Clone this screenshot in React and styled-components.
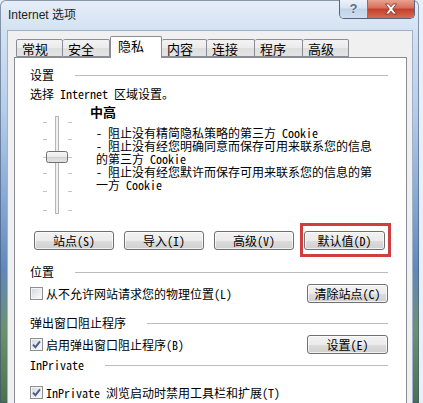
import React from 'react';
import styled, { createGlobalStyle } from 'styled-components';

const UI_FONT = `"Noto Sans Mono CJK SC", "Noto Sans CJK SC", "Liberation Mono", monospace`;
const TITLE_FONT = `"Liberation Sans", "Noto Sans CJK SC", sans-serif`;

const GlobalStyle = createGlobalStyle`
  html, body {
    margin: 0;
    padding: 0;
    width: 423px;
    height: 403px;
    overflow: hidden;
    background: #e9eff7;
  }
`;

const Window = styled.div`
  width: 419px;
  height: 403px;
  display: flex;
  flex-direction: column;
  border-radius: 6px 6px 0 0;
  overflow: hidden;
  background: linear-gradient(
    to bottom,
    #e6eef8 0,
    #d4e2f2 30px,
    #b6cde8 110px,
    #86a8d3 200px,
    #6287b8 270px,
    #6c9170 330px,
    #4b7150 403px
  );
  box-shadow: inset 0 0 0 1px rgba(60, 80, 110, 0.55);
`;

const TitleBar = styled.div`
  height: 30px;
  flex: none;
  display: flex;
  align-items: flex-start;
  justify-content: space-between;
  padding: 0 4px 0 8px;
`;

const TitleText = styled.div`
  font-family: ${TITLE_FONT};
  font-size: 12px;
  line-height: 30px;
  color: #1e1e1e;
`;

const Controls = styled.div`
  display: flex;
  border: 1px solid #54647c;
  border-top: none;
  border-radius: 0 0 5px 5px;
  overflow: hidden;
  margin-top: -1px;
`;

const HelpButton = styled.div`
  width: 27px;
  height: 19px;
  display: flex;
  align-items: center;
  justify-content: center;
  background: linear-gradient(to bottom, #eef3fa 0, #d9e4f1 45%, #c2d3e8 55%, #cfdeef 100%);
  border-right: 1px solid #6a7a92;
  font-family: ${TITLE_FONT};
  font-weight: bold;
  font-size: 13px;
  color: #5d6b80;
  text-shadow: 0 0 2px #fff;
`;

const CloseButton = styled.div`
  width: 46px;
  height: 19px;
  display: flex;
  align-items: center;
  justify-content: center;
  background: linear-gradient(to bottom, #e9a897 0, #d9705d 45%, #c2412d 55%, #d86b4f 100%);
`;

const Client = styled.div`
  flex: 1;
  display: flex;
  flex-direction: column;
  margin: 0 6px 0 7px;
  background: #f0f0f0;
  border: 1px solid #9fb2ca;
  border-bottom: none;
`;

const TabRow = styled.div`
  display: flex;
  align-items: flex-end;
  height: 21px;
  margin-top: 5px;
  padding-left: 8px;
  position: relative;
  z-index: 1;
`;

const Tab = styled.div`
  box-sizing: border-box;
  width: ${p => p.$w}px;
  height: ${p => (p.$active ? 22 : 18)}px;
  margin-bottom: ${p => (p.$active ? -1 : 0)}px;
  padding-left: ${p => (p.$active ? 7 : 5)}px;
  border: 1px solid #898c95;
  border-bottom: ${p => (p.$active ? 'none' : '1px solid #898c95')};
  border-left-width: ${p => (p.$first || p.$active ? 1 : 0)}px;
  border-radius: 2px 2px 0 0;
  background: ${p => (p.$active ? '#fff' : 'linear-gradient(to bottom, #f3f3f3 0, #ebebeb 50%, #dedede 51%, #e4e4e4 100%)')};
  font-family: "Noto Sans CJK SC", sans-serif;
  font-size: 13px;
  line-height: ${p => (p.$active ? 18 : 17)}px;
  color: #000;
`;

const Panel = styled.div`
  flex: 1;
  margin: 0 5px 0 6px;
  background: #fff;
  border: 1px solid #898c95;
  border-bottom: none;
  padding: 10px 18px 0 15px;
  display: flex;
  flex-direction: column;
  font-family: ${UI_FONT};
  font-size: 12px;
  color: #000;
`;

const GroupHeader = styled.div`
  display: flex;
  align-items: center;
  gap: 21px;
  height: 14px;
  line-height: 14px;
  margin-top: ${p => p.$mt || 0}px;
  white-space: nowrap;

  &::after {
    content: '';
    flex: 1;
    height: 1px;
    background: #b9bcc0;
    box-shadow: 0 1px 0 #fff;
  }
`;

const Hint = styled.div`
  margin-top: 5px;
  line-height: 14px;
  white-space: nowrap;
`;

const SliderArea = styled.div`
  display: flex;
  margin-top: 2px;
`;

const SliderBox = styled.svg`
  flex: none;
  margin-left: 8px;
`;

const LevelText = styled.div`
  margin-left: 12px;
  display: flex;
  flex-direction: column;
`;

const LevelTitle = styled.div`
  font-family: "Noto Sans CJK SC", sans-serif;
  font-weight: bold;
  font-size: 13px;
  line-height: 18px;
`;

const LevelDesc = styled.div`
  margin-top: 5px;
  padding-left: 6px;
  line-height: 13px;
  white-space: nowrap;
`;

const ButtonRow = styled.div`
  display: flex;
  gap: 10px;
  margin-top: 14px;
  padding-left: 4px;
`;

const Button = styled.div`
  box-sizing: border-box;
  width: ${p => p.$w || 80}px;
  height: 19px;
  display: flex;
  align-items: center;
  justify-content: center;
  border: 1px solid #707070;
  border-radius: 3px;
  background: linear-gradient(to bottom, #f2f2f2 0, #ebebeb 50%, #dddddd 51%, #cfcfcf 100%);
  box-shadow: inset 0 0 0 1px rgba(255, 255, 255, 0.7);
  line-height: 17px;
  white-space: nowrap;
`;

const Marked = styled.div`
  position: relative;
`;

const MarkBox = styled.span`
  position: absolute;
  left: -4px;
  top: -8px;
  width: 91px;
  height: 34px;
  box-sizing: border-box;
  border: 3px solid #cf3f3f;
  pointer-events: none;
`;

const OptionRow = styled.div`
  display: flex;
  align-items: center;
  justify-content: space-between;
  height: ${p => p.$h || 19}px;
  margin-top: ${p => p.$mt || 0}px;
`;

const CheckLabel = styled.label`
  display: flex;
  align-items: center;
  gap: 3px;
  white-space: nowrap;
  line-height: 14px;
`;

const Box = styled.span`
  box-sizing: border-box;
  width: 13px;
  height: 13px;
  flex: none;
  display: flex;
  align-items: center;
  justify-content: center;
  border: 1px solid #8e8f8f;
  background: linear-gradient(135deg, #d3d6db 0, #eceef0 60%, #fbfbfb 100%);
  box-shadow: inset 0 0 0 1px #f4f4f4;
`;

const Checkbox = ({ checked }) => (
  <Box>
    {checked && (
      <svg width="11" height="11" viewBox="0 0 11 11">
        <path d="M2 5.6 L4.4 8.2 L9 2.4" fill="none" stroke="#4a5e8c" strokeWidth="1.9" />
      </svg>
    )}
  </Box>
);

const TICKS = [19, 36, 54, 70, 88, 107];

const PrivacySlider = () => (
  <SliderBox width="40" height="114" viewBox="0 0 40 114">
    <defs>
      <linearGradient id="thumb" x1="0" y1="0" x2="0" y2="1">
        <stop offset="0" stopColor="#f7f7f7" />
        <stop offset="0.5" stopColor="#e9e9e9" />
        <stop offset="0.55" stopColor="#d9d9d9" />
        <stop offset="1" stopColor="#e2e2e2" />
      </linearGradient>
    </defs>
    <rect x="17.5" y="13.5" width="3" height="97" fill="#eef0f2" stroke="#b4b6b8" />
    {TICKS.map(y => (
      <g key={y} stroke="#c4c4c4">
        <line x1="5" y1={y + 0.5} x2="9" y2={y + 0.5} />
        <line x1="30" y1={y + 0.5} x2="34" y2={y + 0.5} />
      </g>
    ))}
    <rect x="8.5" y="48.5" width="21" height="11" rx="2" fill="url(#thumb)" stroke="#6f6f6f" />
    <line x1="10" y1="54.5" x2="28" y2="54.5" stroke="#cfcfcf" />
  </SliderBox>
);

const TABS = [
  { label: '常规', w: 47 },
  { label: '安全', w: 47 },
  { label: '隐私', w: 52, active: true },
  { label: '内容', w: 45 },
  { label: '连接', w: 48 },
  { label: '程序', w: 48 },
  { label: '高级', w: 46 },
];

export default function App() {
  return (
    <>
      <GlobalStyle />
      <Window>
        <TitleBar>
          <TitleText>Internet 选项</TitleText>
          <Controls>
            <HelpButton>?</HelpButton>
            <CloseButton>
              <svg width="14" height="12" viewBox="0 0 14 12">
                <path
                  d="M1.5 1 H4.7 L7 3.8 L9.3 1 H12.5 L8.7 6 L12.5 11 H9.3 L7 8.2 L4.7 11 H1.5 L5.3 6 Z"
                  fill="#fff"
                  stroke="#7a2a20"
                  strokeWidth="0.8"
                />
              </svg>
            </CloseButton>
          </Controls>
        </TitleBar>

        <Client>
          <TabRow>
            {TABS.map((t, i) => (
              <Tab key={t.label} $w={t.w} $active={t.active} $first={i === 0}>
                {t.label}
              </Tab>
            ))}
          </TabRow>

          <Panel>
            <GroupHeader>设置</GroupHeader>
            <Hint>选择 Internet 区域设置。</Hint>

            <SliderArea>
              <PrivacySlider />
              <LevelText>
                <LevelTitle>中高</LevelTitle>
                <LevelDesc>
                  - 阻止没有精简隐私策略的第三方 Cookie<br />
                  - 阻止没有经您明确同意而保存可用来联系您的信息<br />
                  的第三方 Cookie<br />
                  - 阻止没有经您默许而保存可用来联系您的信息的第<br />
                  一方 Cookie
                </LevelDesc>
              </LevelText>
            </SliderArea>

            <ButtonRow>
              <Button>站点(S)</Button>
              <Button>导入(I)</Button>
              <Button>高级(V)</Button>
              <Marked>
                <Button $w={81}>默认值(D)</Button>
                <MarkBox />
              </Marked>
            </ButtonRow>

            <GroupHeader $mt={15}>位置</GroupHeader>
            <OptionRow $mt={5}>
              <CheckLabel>
                <Checkbox />
                从不允许网站请求您的物理位置(L)
              </CheckLabel>
              <Button $w={81}>清除站点(C)</Button>
            </OptionRow>

            <GroupHeader $mt={13}>弹出窗口阻止程序</GroupHeader>
            <OptionRow $mt={5}>
              <CheckLabel>
                <Checkbox checked />
                启用弹出窗口阻止程序(B)
              </CheckLabel>
              <Button $w={81}>设置(E)</Button>
            </OptionRow>

            <GroupHeader $mt={4}>InPrivate</GroupHeader>
            <OptionRow $mt={14} $h={13}>
              <CheckLabel>
                <Checkbox checked />
                InPrivate 浏览启动时禁用工具栏和扩展(T)
              </CheckLabel>
            </OptionRow>
          </Panel>
        </Client>
      </Window>
    </>
  );
}
